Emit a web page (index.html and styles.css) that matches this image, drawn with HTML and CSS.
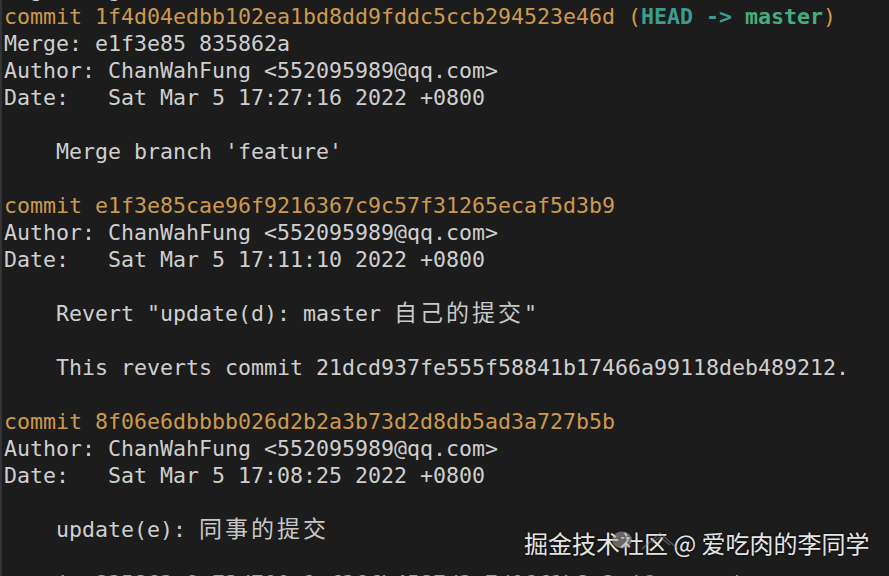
FILE: index.html
```
<!DOCTYPE html>
<html lang="zh-CN">
<head>
  <meta charset="UTF-8" />
  <meta name="viewport" content="width=device-width, initial-scale=1.0"/>
  <title>git log</title>
  <link rel="stylesheet" href="styles.css">
</head>
<body>
  <div class="terminal">
    <div class="line">$ git log</div>
    <div class="line"><span class="commit">commit 1f4d04edbb102ea1bd8dd9fddc5ccb294523e46d (<span class="head">HEAD -&gt; </span><span class="branch">master</span>)</span></div>
    <div class="line">Merge: e1f3e85 835862a</div>
    <div class="line">Author: ChanWahFung &lt;552095989@qq.com&gt;</div>
    <div class="line">Date:   Sat Mar 5 17:27:16 2022 +0800</div>
    <div class="line"></div>
    <div class="line">    Merge branch 'feature'</div>
    <div class="line"></div>
    <div class="line"><span class="commit">commit e1f3e85cae96f9216367c9c57f31265ecaf5d3b9</span></div>
    <div class="line">Author: ChanWahFung &lt;552095989@qq.com&gt;</div>
    <div class="line">Date:   Sat Mar 5 17:11:10 2022 +0800</div>
    <div class="line"></div>
    <div class="line">    Revert "update(d): master <span class="wide">自己的提交</span>"</div>
    <div class="line"></div>
    <div class="line">    This reverts commit 21dcd937fe555f58841b17466a99118deb489212.</div>
    <div class="line"></div>
    <div class="line"><span class="commit">commit 8f06e6dbbbb026d2b2a3b73d2d8db5ad3a727b5b</span></div>
    <div class="line">Author: ChanWahFung &lt;552095989@qq.com&gt;</div>
    <div class="line">Date:   Sat Mar 5 17:08:25 2022 +0800</div>
    <div class="line"></div>
    <div class="line">    update(e): <span class="wide">同事的提交</span></div>
    <div class="line"></div>
    <div class="line"><span class="commit">commit 835862a9c73d700a1ef36fb4587d3e7d06f1b8c2 (<span class="branch">feature</span>)</span></div>
  </div>

  <div class="watermark">
    <span>掘金技术社区 @ 爱吃肉的李同学</span>
    <svg class="wm-icon" width="80" height="28" viewBox="0 0 80 28">
      <ellipse cx="10" cy="11" rx="10" ry="8.5" fill="#a8a8a8" opacity="0.55"/>
      <circle cx="7" cy="9" r="1.5" fill="#5a5a5a" opacity="0.7"/>
      <circle cx="13" cy="9" r="1.5" fill="#5a5a5a" opacity="0.7"/>
      <path d="M30 20 L48 4 L66 20 M40 14 L48 8 L58 16" fill="none" stroke="#9a9a9a" stroke-width="1.2" opacity="0.5"/>
    </svg>
  </div>
</body>
</html>
```

FILE: styles.css
```
* {
  margin: 0;
  padding: 0;
  box-sizing: border-box;
}

html, body {
  height: 100%;
  background: #1c1c1c;
  overflow: hidden;
}

body {
  position: relative;
}

.terminal {
  height: calc(100% + 48px);
  margin-top: -24px;
  padding-left: 2px;
  border-left: 2px solid #343434;
  font-family: "DejaVu Sans Mono", "Noto Sans CJK SC", monospace;
  font-size: 21.6px;
  color: #cfcfcf;
}

.line {
  height: 27px;
  line-height: 27px;
  white-space: pre;
}

.commit {
  color: #cc9a4e;
}

.head {
  color: #3a9d90;
  font-weight: bold;
}

.branch {
  color: #48ac7c;
  font-weight: bold;
}

/* CJK takes two terminal columns */
.wide {
  font-family: "Noto Sans CJK SC", sans-serif;
  font-size: 23px;
  line-height: 20px;
  letter-spacing: 3px;
  color: #c8c8c8;
}

/* watermark over the text */
.watermark {
  position: absolute;
  left: 524px;
  top: 527px;
  font-family: "Noto Sans CJK SC", sans-serif;
  font-size: 24px;
  line-height: 32px;
  color: #e4e4e4;
  text-shadow: 0 0 3px rgba(0, 0, 0, 0.8);
  white-space: nowrap;
}

.wm-icon {
  position: absolute;
  left: 88px;
  top: 2px;
}
```
